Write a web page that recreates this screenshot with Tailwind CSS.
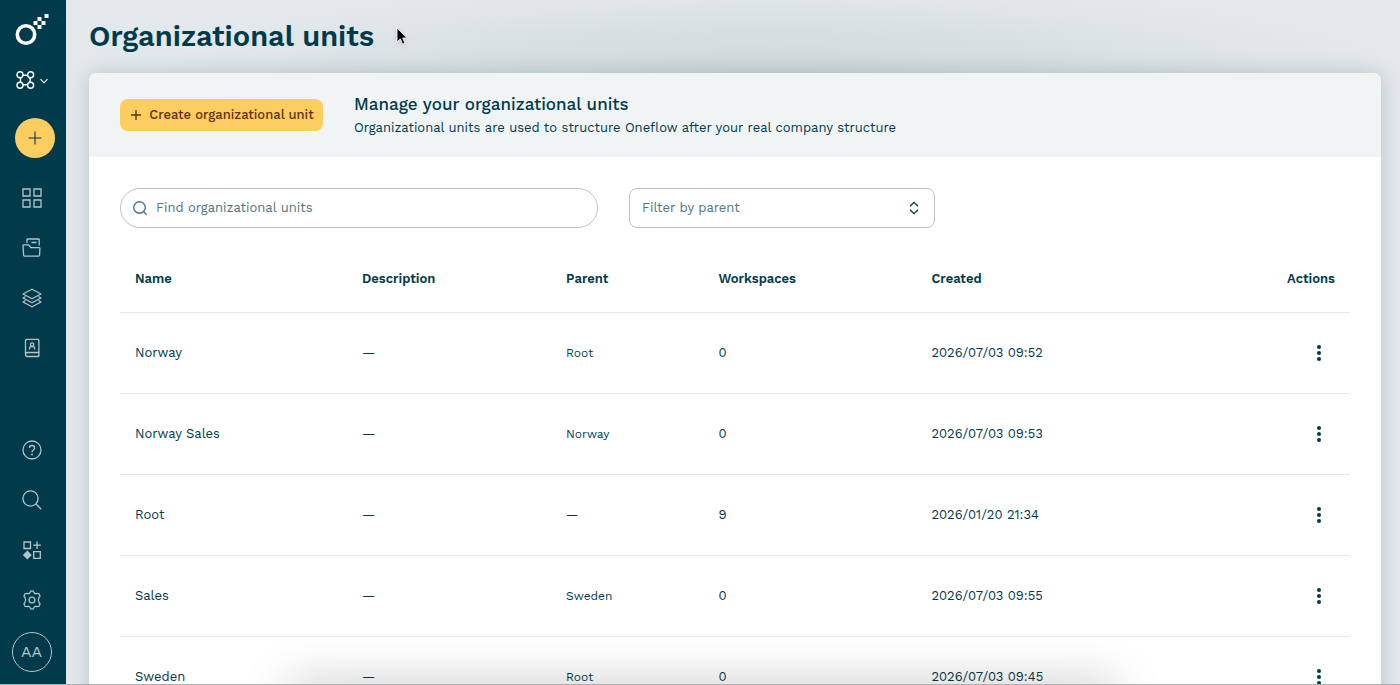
<!DOCTYPE html>
<html lang="en">

<head>
  <meta charset="UTF-8">
  <meta name="viewport" content="width=device-width, initial-scale=1.0">
  <title>Organizational units</title>
  <script src="https://cdn.jsdelivr.net/npm/@tailwindcss/browser@4"></script>
</head>

<body class="relative flex h-screen overflow-hidden bg-[#e3e8eb] font-['Work_Sans',Inter,sans-serif] text-[13px] leading-5 text-[#013a4a]">

  <!-- Sidebar -->
  <nav class="flex w-[66px] shrink-0 flex-col items-center justify-between bg-[#013a4a] pt-[13px] pr-[3px] pb-[13px] text-[#b5c4c9]">
    <div class="flex flex-col items-center">
      <a href="#" aria-label="Home" class="text-white">
        <svg class="size-[34px]" viewBox="0 0 34 34" fill="currentColor">
          <circle cx="11" cy="21.5" r="8.7" fill="none" stroke="currentColor" stroke-width="3.6" />
          <path d="M29.500 1h4v4h-4zM22.500 4h4v4h-4zM26.500 8h4v4h-4zM18.500 8h4v4h-4zM22.500 12h4v4h-4z" />
        </svg>
      </a>
      <button class="mt-[23px] flex items-center gap-1 text-white" aria-label="Switch workspace">
        <svg class="size-5" viewBox="0 0 20 20" fill="none" stroke="currentColor" stroke-width="1.4">
          <circle cx="4" cy="4.7" r="3" />
          <circle cx="14.6" cy="4.7" r="3" />
          <circle cx="4" cy="15.3" r="3" />
          <circle cx="14.6" cy="15.3" r="3" />
          <path d="M7 5.2h4.6M7 14.8h4.6M4.5 7.7v4.6M14.100 7.700v4.600" />
        </svg>
        <svg class="mt-0.5 size-2" viewBox="0 0 8 8" fill="none" stroke="currentColor" stroke-width="1.1">
          <path d="M.5 2.2 4 5.8l3.5-3.6" />
        </svg>
      </button>
      <button class="mt-7 ml-[7px] flex size-10 items-center justify-center rounded-full bg-[#fecd60] text-[#013a4a]" aria-label="Create">
        <svg class="size-[14px]" viewBox="0 0 14 14" stroke="currentColor" stroke-width="1.1">
          <path d="M7 .5v13M.5 7h13" />
        </svg>
      </button>
      <div class="mt-[30px] flex flex-col gap-[30px]">
        <a href="#" aria-label="Dashboard">
          <svg class="size-5" viewBox="0 0 20 20" fill="none" stroke="currentColor" stroke-width="1.3">
            <path d="M1 1h7v7H1zM12 1h7v7h-7zM1 12h7v7H1zM12 12h7v7h-7z" />
          </svg>
        </a>
        <a href="#" aria-label="Documents">
          <svg class="size-5" viewBox="0 0 20 20" fill="none" stroke="currentColor" stroke-width="1.3" stroke-linejoin="round">
            <path d="M5 5V1.600q0-.600.600-.600h11q.600 0 .600.600V7.500M9.500 4.500h5" />
            <path d="M1 7.600q0-.800.800-.800h5l2 2.900h8.400q.8 0 .7.8l-.3 6.700q-.1.900-1 .9H2.600q-.9 0-1-.9z" />
          </svg>
        </a>
        <a href="#" aria-label="Templates">
          <svg class="size-5" viewBox="0 0 20 20" fill="none" stroke="currentColor" stroke-width="1.2" stroke-linejoin="round">
            <path d="m10 1.200 9 4.800-9 4.800L1 6z" />
            <path d="M3.500 8.500 1 10l9 4.800 9-4.800-2.500-1.500M3.500 12.500 1 14l9 4.800 9-4.800-2.500-1.500" />
          </svg>
        </a>
        <a href="#" aria-label="Address book">
          <svg class="size-5" viewBox="0 0 20 20" fill="none" stroke="currentColor" stroke-width="1.3" stroke-linejoin="round">
            <path d="M3.500 16V3q0-1.700 1.700-1.700H16q.9 0 .9.9v15.500q0 .8-.9.8H5.500q-2 0-2-2.200 0-1.800 2-1.800h11.400" />
            <path d="M7.500 11.500v-1.300q0-1.500 2.600-1.500t2.600 1.500v1.300" />
            <circle cx="10.1" cy="6.500" r="1.700" />
          </svg>
        </a>
      </div>
    </div>

    <div class="flex flex-col items-center gap-[22px]">
      <div class="flex flex-col gap-[30px]">
        <a href="#" aria-label="Help">
          <svg class="size-5" viewBox="0 0 20 20" fill="none" stroke="currentColor" stroke-width="1.3">
            <circle cx="10" cy="10" r="9" />
            <path d="M7.400 8q0-2.500 2.600-2.500T12.600 8q0 1.300-1.300 2Q10 10.700 10 12.200" />
            <circle cx="10" cy="14.500" r=".9" fill="currentColor" stroke="none" />
          </svg>
        </a>
        <a href="#" aria-label="Search">
          <svg class="size-5" viewBox="0 0 20 20" fill="none" stroke="currentColor" stroke-width="1.3">
            <circle cx="8.500" cy="8.500" r="7.600" />
            <path d="m14 14 5.200 5.200" />
          </svg>
        </a>
        <a href="#" aria-label="Apps">
          <svg class="size-5" viewBox="0 0 20 20" fill="none" stroke="currentColor" stroke-width="1.3">
            <path d="M2 2h6.500v6.500H2zM11.700 11.700h6.600v6.600h-6.600zM15 1.500v7.500M11.200 5.200h7.600" />
            <path d="m5.300 10.500 4.500 4.500-4.500 4.500L.8 15z" fill="currentColor" stroke="none" />
          </svg>
        </a>
        <a href="#" aria-label="Settings">
          <svg class="size-5" viewBox="0 0 20 20" fill="none" stroke="currentColor" stroke-width="1.3" stroke-linejoin="round">
            <path d="M8 2.500Q8.300.8 10 .8t2 1.700q.4 1.500 2 1.100 2.300-.8 3.200.5 1.500 2-.1 3.400-1.600 2.500 0 5 1.600 1.400.1 3.400-.9 1.300-3.200.5-1.600-.4-2 1.100-.3 1.700-2 1.700t-2-1.700q-.4-1.500-2-1.100-2.300.8-3.200-.5-1.500-2 .1-3.400 1.600-2.500 0-5-1.600-1.400-.1-3.400.9-1.300 3.200-.5 1.600.4 2-1.100z" />
            <circle cx="10" cy="10" r="2.900" />
          </svg>
        </a>
      </div>
      <button class="flex size-10 items-center justify-center rounded-full border border-current text-base">AA</button>
    </div>
  </nav>

  <!-- Page -->
  <main class="min-w-0 flex-1 bg-[radial-gradient(ellipse_620px_95px_at_53%_80px,#ccd6d9,transparent)] pt-[15px] pr-[19px] pl-[23px]">
    <h1 class="text-[29px] leading-[42px] font-semibold">Organizational units</h1>

    <section class="mt-4 min-h-screen overflow-hidden rounded-t-lg bg-white shadow-[0_0_20px_rgba(1,58,74,0.2)]">
      <header class="flex items-center gap-[31px] bg-[#f0f4f5] px-[31px] py-[18px]">
        <button class="flex h-8 min-w-[203px] items-center justify-center gap-1.5 rounded-lg bg-[#fecd60] px-2 font-medium text-[#5b3310]">
          <svg class="size-[14px]" viewBox="0 0 14 14" stroke="currentColor" stroke-width="1.3">
            <path d="M7 2v10M2 7h10" />
          </svg>
          Create organizational unit
        </button>
        <div>
          <h2 class="text-[17px] leading-[26px] font-medium">Manage your organizational units</h2>
          <p class="leading-[22px]">Organizational units are used to structure Oneflow after your real company structure</p>
        </div>
      </header>

      <div class="px-[31px] pt-[31px]">
        <div class="flex gap-[31px]">
          <label class="flex h-10 w-[478px] items-center gap-2 rounded-full border border-[#bfc2c4] px-3 text-[#4f7682]">
            <svg class="size-[15px]" viewBox="0 0 15 15" fill="none" stroke="currentColor" stroke-width="1.4">
              <circle cx="6.500" cy="6.500" r="5.800" />
              <path d="m10.500 10.500 3.200 3.200" />
            </svg>
            <input type="search" aria-label="Find organizational units" placeholder="Find organizational units" class="min-w-0 flex-1 outline-none placeholder:text-[#4f7682]">
          </label>
          <div class="relative w-[306px]">
            <select aria-label="Filter by parent" class="h-10 w-full appearance-none rounded-lg border border-[#bfc2c4] px-3 text-[#4f7682]">
              <option>Filter by parent</option>
              <option>Root</option>
              <option>Norway</option>
              <option>Sweden</option>
            </select>
            <svg class="pointer-events-none absolute top-3 right-[13px] size-4" viewBox="0 0 16 16" fill="none" stroke="currentColor" stroke-width="1.3">
              <path d="M4 6.200 8 2.400l4 3.800M4 9.800l4 3.800 4-3.800" />
            </svg>
          </div>
        </div>

        <table class="mt-[18px] w-full table-fixed text-left">
          <colgroup>
            <col class="w-[18.45%]">
            <col class="w-[16.6%]">
            <col class="w-[12.4%]">
            <col class="w-[17.3%]">
            <col>
            <col class="w-[12%]">
          </colgroup>
          <thead>
            <tr class="h-[66px] border-b border-[#e6e8e9]">
              <th class="px-[15px] font-semibold">Name</th>
              <th class="px-[15px] font-semibold">Description</th>
              <th class="px-[15px] font-semibold">Parent</th>
              <th class="px-[15px] font-semibold">Workspaces</th>
              <th class="px-[15px] font-semibold">Created</th>
              <th class="px-[15px] text-right font-semibold">Actions</th>
            </tr>
          </thead>
          <tbody id="units"></tbody>
        </table>
      </div>
    </section>
  </main>

  <!-- Mouse pointer -->
  <svg class="absolute top-[27px] left-[395px] h-[19px] w-[14px] drop-shadow" viewBox="0 0 14 19">
    <path d="M2 1v14l3.300-3.100 2.300 5.300 2.400-1-2.300-5.200h4.500z" fill="#000" stroke="#fff" stroke-width=".9" />
  </svg>

  <!-- Shadow of the bar that sits below the fold -->
  <div class="pointer-events-none absolute inset-x-0 bottom-0 h-[60px] overflow-hidden border-b border-[#adb0b2]">
    <div class="absolute top-full right-[285px] left-[290px] h-10 shadow-[0_0_50px_rgba(0,0,0,0.22)]"></div>
  </div>

  <script>
    const units = [
      ['Norway', '—', 'Root', '0', '2026/07/03 09:52'],
      ['Norway Sales', '—', 'Norway', '0', '2026/07/03 09:53'],
      ['Root', '—', '—', '9', '2026/01/20 21:34'],
      ['Sales', '—', 'Sweden', '0', '2026/07/03 09:55'],
      ['Sweden', '—', 'Root', '0', '2026/07/03 09:45']
    ];

    document.getElementById('units').innerHTML = units.map(([name, description, parent, workspaces, created]) => `
      <tr class="h-[81px] border-b border-[#e6e8e9]">
        <td class="px-[15px]">${name}</td>
        <td class="px-[15px]">${description}</td>
        <td class="px-[15px] text-[12px]">${parent}</td>
        <td class="px-[15px]">${workspaces}</td>
        <td class="px-[15px]">${created}</td>
        <td class="px-[15px] text-right">
          <button class="inline-flex size-8 items-center justify-center align-middle" aria-label="Actions for ${name}">
            <svg class="h-4 w-1" viewBox="0 0 4 16" fill="currentColor">
              <circle cx="2" cy="2" r="2" />
              <circle cx="2" cy="8" r="2" />
              <circle cx="2" cy="14" r="2" />
            </svg>
          </button>
        </td>
      </tr>`).join('');
  </script>
</body>

</html>
